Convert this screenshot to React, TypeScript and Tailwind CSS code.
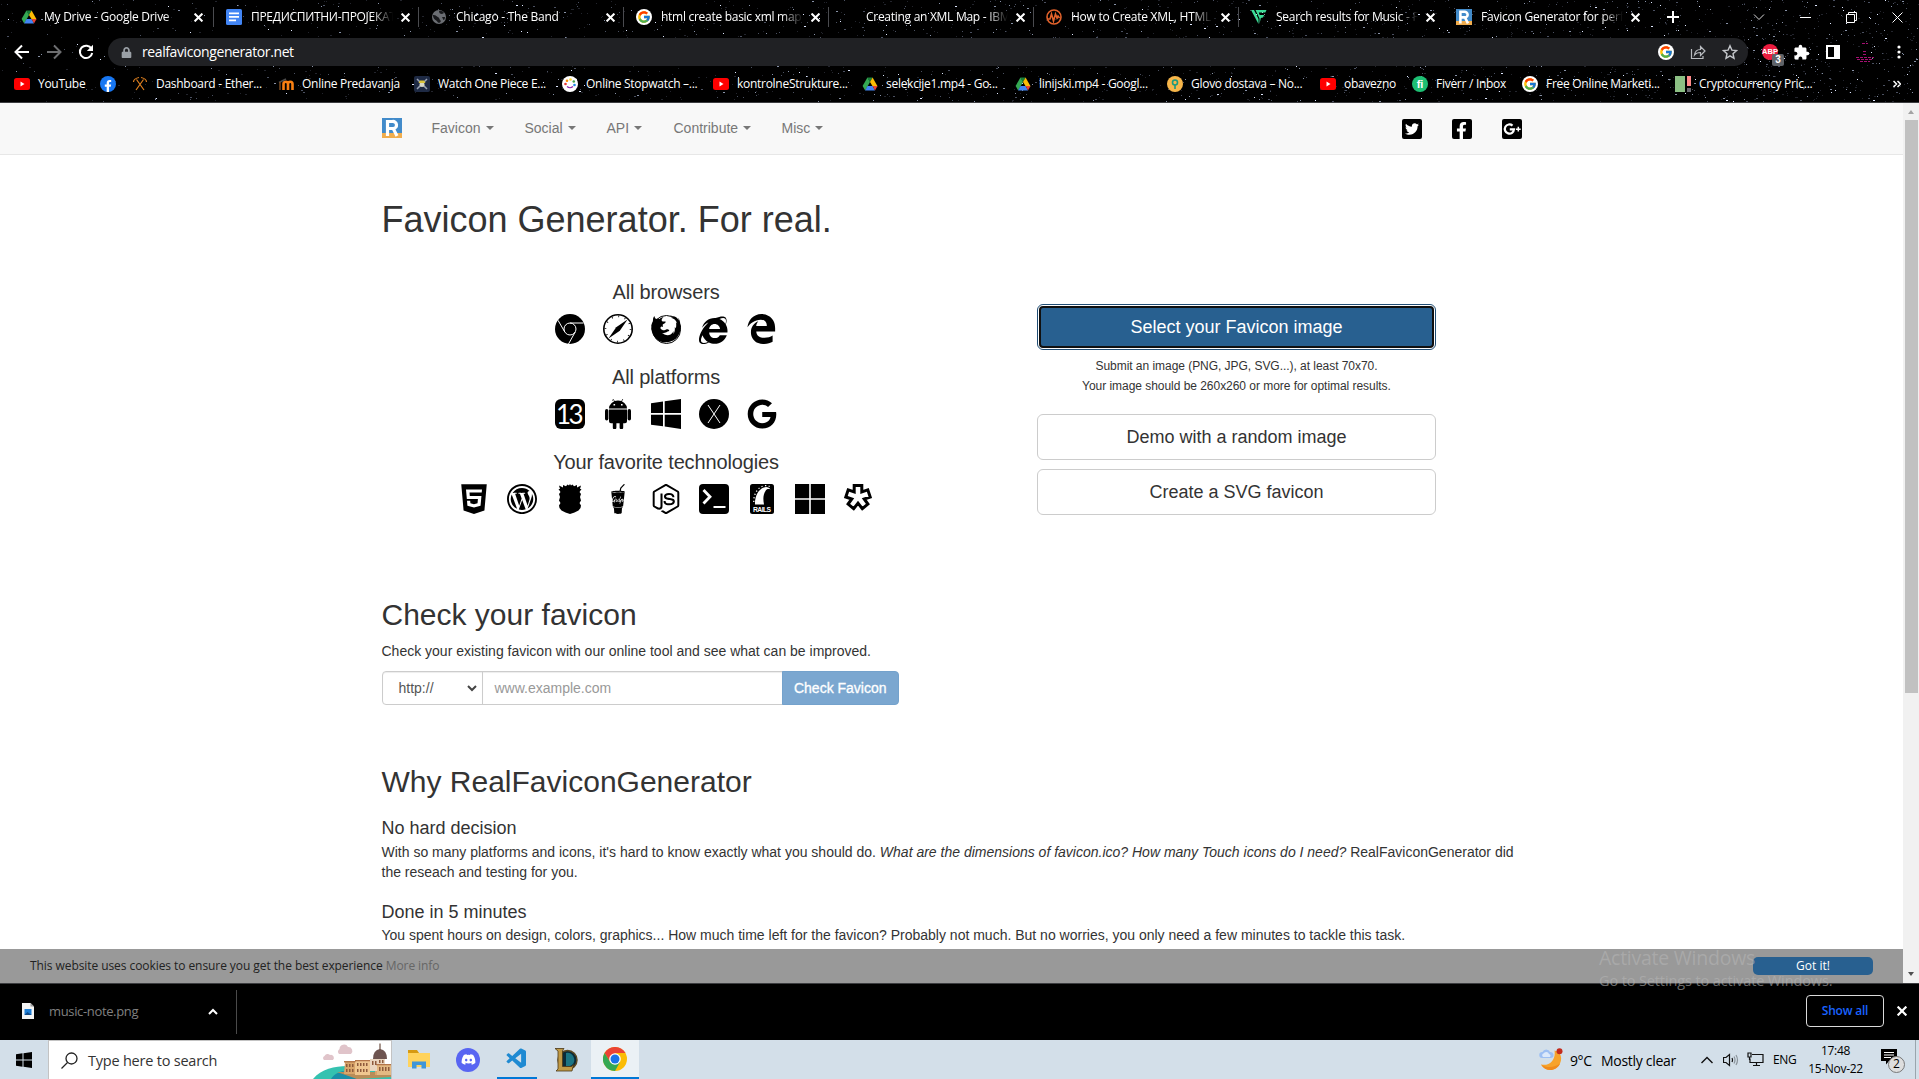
import React from "react";
import { ImEdge, ImFirefox, ImIe, ImWordpress } from "react-icons/im";
import { FaDiscord, FaGoogle, FaGulp, FaHtml5, FaLock, FaTwitter, FaFacebookF } from "react-icons/fa";
import { FcGoogle } from "react-icons/fc";
import { MdExtension } from "react-icons/md";
import { SiNodedotjs } from "react-icons/si";
import { VscVscode } from "react-icons/vsc";

const UI = "font-['Open_Sans','Noto_Sans',sans-serif]";
const ARIAL = "font-['Liberation_Sans',Arial,sans-serif]";

/* ---------- star field behind the browser frame ---------- */

function makeStars() {
  let seed = 90210;
  const rnd = () => {
    seed = (seed * 1664525 + 1013904223) % 4294967296;
    return seed / 4294967296;
  };
  const paths = ["", "", "", ""];
  for (let i = 0; i < 4200; i++) {
    const x = Math.floor(rnd() * 1919);
    const y = Math.floor(rnd() * 102);
    const level = Math.floor(rnd() * rnd() * 4.6);
    const keep = rnd() < 0.25 + (x / 1919) * 0.75;
    const wide = rnd() > 0.8 ? 2 : 1;
    if (keep) paths[Math.min(level, 3)] += `M${x} ${y}h${wide}v1h-${wide}z`;
  }
  return paths;
}
const STARS = makeStars();
const STAR_COLORS = ["#22242c", "#4a5060", "#8791a6", "#dfe8ff"];

function Stars() {
  return (
    <svg className="absolute inset-0" width="1919" height="102" aria-hidden="true">
      {STARS.map((d, i) => (
        <path key={i} d={d} fill={STAR_COLORS[i]} />
      ))}
    </svg>
  );
}

/* ---------- small brand icons ---------- */

const Drive = () => (
  <svg width="16" height="16" viewBox="0 0 16 16">
    <path d="M5.4 1.5h5.2L8 6z" fill="#188038" />
    <path d="M5.4 1.5 8 6 3.2 14.4.6 10z" fill="#34a853" />
    <path d="M10.600 1.500 8 6l2.600 4.200h4.900z" fill="#fbbc04" />
    <path d="M5.500 10h5.100L13 14.400H3.100z" fill="#4285f4" />
    <path d="M10.600 10h4.900L13 14.400z" fill="#ea4335" />
  </svg>
);
const Docs = () => (
  <svg width="16" height="16" viewBox="0 0 16 16">
    <rect width="16" height="16" rx="1.500" fill="#4285f4" />
    <path d="M3 3.500h10v1.800H3zM3 7h10v1.800H3zM3 10.500h7v1.800H3z" fill="#fff" />
  </svg>
);
const Globe = () => (
  <svg width="16" height="16" viewBox="0 0 16 16">
    <circle cx="8" cy="8" r="7" fill="#6b6e73" />
    <path d="M2 6c3 0 3 1 5 2s1 3 3 4c-1 2-2 2-3 1.500C6 11 2 11 2 6zM8 2c0 2 1 3 3 3l2-1c-1-2-3-2.500-5-2zM11 8l3 0c0 1-.5 3-1.500 3z" fill="#17181b" />
  </svg>
);
const GoogleRound = () => (
  <span className="flex size-4 items-center justify-center rounded-full bg-white">
    <FcGoogle size={14} />
  </span>
);
const Pulse = () => (
  <svg width="16" height="16" viewBox="0 0 16 16" fill="none" stroke="#e2622b" strokeWidth="1.600">
    <circle cx="8" cy="8" r="7" />
    <path d="M1.500 10H4l1.500-5 2 7 2-7 1.500 4 1-2 1.500 2" />
  </svg>
);
const Flutter = () => (
  <svg width="16" height="16" viewBox="0 0 16 16" fill="#3ddc97">
    <path d="M0 1h3l4.500 9v5z" />
    <path d="M4.500 1H15.500l-1.200 2.600H7.800L8.600 6h4.600l-1.200 2.500-2.200.5L8.500 15V9.500z" />
  </svg>
);
const RLogo = ({ size = 16 }: { size?: number }) => (
  <svg width={size} height={size} viewBox="0 0 20 20">
    <path d="M0 0h20v15H0z" fill="#428bca" />
    <path d="M0 15h20v5H0z" fill="#f0ad4e" />
    <path d="M5.500 18V3.500h5a3.600 3.600 0 0 1 .8 7.200L15 18M5.500 10.500h5.500" fill="none" stroke="#fff" strokeWidth="3.200" />
  </svg>
);
const YouTube = () => (
  <svg width="16" height="16" viewBox="0 0 16 16">
    <rect y="2" width="16" height="12" rx="2.500" fill="#f00" />
    <path d="M6.500 5.500v5L10.500 8z" fill="#fff" />
  </svg>
);
const Facebook = () => (
  <span className="flex size-4 items-end justify-center rounded-full bg-[#1877f2] text-white">
    <FaFacebookF size={12} />
  </span>
);
const Pickaxes = () => (
  <svg width="16" height="16" viewBox="0 0 16 16" fill="none" stroke="#e0801f" strokeWidth="1.200">
    <path d="M4 14 11.500 3.500M12 14 4.500 3.500M1.500 6c0-2 2.500-4 5.500-4.500M14.500 6c0-2-2.500-4-5.500-4.500" />
  </svg>
);
const Moodle = () => (
  <svg width="16" height="16" viewBox="0 0 16 16" fill="none" strokeWidth="2.600">
    <path d="M5.500 14V8a2 2 0 0 1 4.500 0v6M10 8a2 2 0 0 1 4.500 0v6" stroke="#f98012" />
    <path d="M1 6.500 8 3" stroke="#4a4a4a" strokeWidth="1.600" />
    <path d="M2 6v8" stroke="#7a4a20" strokeWidth="1.500" />
  </svg>
);
const OnePiece = () => (
  <svg width="16" height="16" viewBox="0 0 16 16">
    <rect width="16" height="16" rx="2" fill="#1e2a44" />
    <path d="m3 3 10 10M13 3 3 13" stroke="#9aa3b5" strokeWidth="1.500" />
    <circle cx="8" cy="8.500" r="2.500" fill="#d8d8c8" />
    <path d="M4.500 7h7L10 4.500H6z" fill="#d9c43a" />
  </svg>
);
const Stopwatch = () => (
  <svg width="16" height="16" viewBox="0 0 16 16">
    <circle cx="8" cy="8" r="8" fill="#fff" />
    <circle cx="3.500" cy="8" r="1.300" fill="#e53935" />
    <circle cx="5" cy="4.800" r="1.300" fill="#fb8c00" />
    <circle cx="8.500" cy="3.500" r="1.300" fill="#fdd835" />
    <circle cx="11.800" cy="5.500" r="1.300" fill="#43a047" />
    <circle cx="12.500" cy="9" r="1.300" fill="#1e88e5" />
    <path d="M5 10.500q3 2.500 6 0" fill="none" stroke="#8e24aa" strokeWidth="1.200" />
  </svg>
);
const Glovo = () => (
  <svg width="16" height="16" viewBox="0 0 16 16">
    <circle cx="8" cy="8" r="8" fill="#f7b64a" />
    <circle cx="8" cy="6.500" r="2.500" fill="none" stroke="#1a9a80" strokeWidth="1.600" />
    <path d="M8 9v4" stroke="#1a9a80" strokeWidth="1.600" />
  </svg>
);
const Fiverr = () => (
  <span className={`flex size-4 items-center justify-center rounded-full bg-[#1dbf73] text-[11px] leading-none font-bold text-white ${ARIAL}`}>
    fi
  </span>
);
const CoinBars = () => (
  <svg width="16" height="16" viewBox="0 0 16 16">
    <path d="M0 0h10v16H0z" fill="#8cc084" />
    <path d="M12 0h4v10h-4z" fill="#ff8a8a" />
    <path d="M12 12h4v4h-4z" fill="#6b6b72" />
  </svg>
);
const Cross = ({ size = 8, width = 1.8 }: { size?: number; width?: number }) => (
  <svg width={size} height={size} viewBox="0 0 8 8" stroke="#fff" strokeWidth={width}>
    <path d="m.5.5 7 7m0-7-7 7" />
  </svg>
);

/* ---------- browser frame ---------- */

const TABS = [
  { icon: <Drive />, title: "My Drive - Google Drive", sep: true, track: "tracking-[-0.26px]" },
  { icon: <Docs />, title: "ПРЕДИСПИТНИ-ПРОЈЕКАТ", sep: true, track: "tracking-[-0.3px]" },
  { icon: <Globe />, title: "Chicago - The Band", sep: true, track: "tracking-[-0.25px]" },
  { icon: <GoogleRound />, title: "html create basic xml map - G", sep: true, track: "tracking-[-0.28px]" },
  { icon: null, title: "Creating an XML Map - IBM D", sep: true, track: "tracking-[-0.28px]" },
  { icon: <Pulse />, title: "How to Create XML, HTML M", sep: true, track: "tracking-[-0.25px]" },
  { icon: <Flutter />, title: "Search results for Music - Fr", sep: false, track: "tracking-[-0.28px]" },
  { icon: <RLogo />, title: "Favicon Generator for perfec", sep: false, track: "tracking-[-0.22px]" },
];

function TabStrip() {
  return (
    <div className="relative flex h-[34px] items-center pl-[9px] text-white">
      {TABS.map((t, i) => (
        <div key={t.title} className="relative flex h-[34px] w-[205px] shrink-0 items-center pl-3">
          <span className="flex size-4 shrink-0">{t.icon}</span>
          <span
            className={`w-[142px] overflow-hidden mask-r-from-85% text-[12px] leading-4 whitespace-nowrap ${t.track} ${i === 0 ? "ml-[7px]" : "ml-[9px]"}`}
          >
            {t.title}
          </span>
          <span className="ml-2">
            <Cross size={9} />
          </span>
          {t.sep && <span className="absolute top-[7px] right-0 h-5 w-px bg-[#4a4b4f]" />}
        </div>
      ))}
      <svg className="ml-[18px]" width="12" height="12" viewBox="0 0 12 12" stroke="#fff" strokeWidth="2">
        <path d="M6 0v12M0 6h12" />
      </svg>
      <div className="ml-auto flex h-7 items-center gap-[35px] pr-4">
        <svg width="12" height="12" viewBox="0 0 12 12" fill="none" stroke="#ddd">
          <path d="m1 3.500 5 5 5-5" />
        </svg>
        <svg width="11" height="11" viewBox="0 0 11 11" stroke="#fff">
          <path d="M0 5.500h11" />
        </svg>
        <svg width="11" height="11" viewBox="0 0 11 11" fill="none" stroke="#fff">
          <path d="M.5 2.500h8v8h-8zM2.500 2.500v-2h8v8h-2" />
        </svg>
        <svg width="11" height="11" viewBox="0 0 11 11" stroke="#fff">
          <path d="m.5.500 10 10m0-10-10 10" />
        </svg>
      </div>
    </div>
  );
}

function Toolbar() {
  return (
    <div className="relative flex h-[36px] items-center pl-[14px] text-white">
      <svg width="16" height="16" viewBox="0 0 16 16" fill="none" stroke="#fff" strokeWidth="2">
        <path d="M15 8H2M8 1.500 1.500 8 8 14.500" />
      </svg>
      <svg className="ml-4" width="16" height="16" viewBox="0 0 16 16" fill="none" stroke="#6d6e70" strokeWidth="2">
        <path d="M1 8h13M8 1.500 14.500 8 8 14.500" />
      </svg>
      <svg className="ml-4" width="16" height="16" viewBox="0 0 16 16" fill="none" stroke="#fff" strokeWidth="2">
        <path d="M13.500 4.800A6.200 6.200 0 1 0 14.200 9" />
        <path d="M15 .8V7H8.800z" fill="#fff" stroke="none" />
      </svg>
      <div className="ml-[14px] flex h-7 w-[1640px] items-center rounded-full bg-[#202124] pr-[10px] pl-[13px]">
        <FaLock size={11} color="#9aa0a6" />
        <span className="ml-[10px] text-[14px] leading-5 tracking-[-0.4px]">realfavicongenerator.net</span>
        <div className="ml-auto flex items-center gap-4">
          <GoogleRound />
          <svg width="16" height="16" viewBox="0 0 16 16" fill="none" stroke="#b9bcc0" strokeWidth="1.200">
            <path d="M1.500 5v9.500H13V12M4.500 11c.5-4 3-5.500 6-5.500V2.500L15 7l-4.500 4.500v-3c-3 0-4.500.5-6 2.500z" />
          </svg>
          <svg width="16" height="16" viewBox="0 0 16 16" fill="none" stroke="#c4c7cb" strokeWidth="1.400">
            <path d="m8 1.800 1.900 4.300 4.600.5-3.500 3.100 1 4.600L8 11.900l-4 2.400 1-4.600L1.500 6.600l4.600-.5z" />
          </svg>
        </div>
      </div>
      <div className="ml-[14px] flex items-center">
        <div className={`relative flex size-4 items-center justify-center rounded-full bg-[#ec1c3f] text-[7.5px] leading-none font-bold ${ARIAL}`}>
          ABP
          <span className="absolute top-[10px] left-[10px] flex h-3 w-3 items-center justify-center rounded-[2px] bg-[#5f6368] text-[10px]">
            3
          </span>
        </div>
        <MdExtension className="ml-[15px]" size={17} />
        <svg className="ml-[16px]" width="14" height="14" viewBox="0 0 14 14">
          <path d="M0 0h14v14H0zM2 2v10h6V2z" fill="#fff" fillRule="evenodd" />
        </svg>
        <svg className="ml-[15px]" width="20" height="20" viewBox="0 0 20 20" stroke="#a50f72">
          <path d="M7 1.500h6M8 9.500h4M8 12.500h4M1 15.500h18M2 17.500h16M5 19.500h10" strokeWidth="1.200" strokeDasharray="3 1" />
        </svg>
        <svg className="ml-[22px]" width="4" height="14" viewBox="0 0 4 14" fill="#fff">
          <circle cx="2" cy="2" r="1.600" />
          <circle cx="2" cy="7" r="1.600" />
          <circle cx="2" cy="12" r="1.600" />
        </svg>
      </div>
    </div>
  );
}

const BOOKMARKS = [
  { icon: <YouTube />, label: "YouTube", w: "w-[86px]" },
  { icon: <Facebook />, label: "", w: "w-[32px]" },
  { icon: <Pickaxes />, label: "Dashboard - Ether...", w: "w-[146px]" },
  { icon: <Moodle />, label: "Online Predavanja", w: "w-[136px]" },
  { icon: <OnePiece />, label: "Watch One Piece E...", w: "w-[148px]" },
  { icon: <Stopwatch />, label: "Online Stopwatch –...", w: "w-[151px]" },
  { icon: <YouTube />, label: "kontrolneStrukture...", w: "w-[149px]" },
  { icon: <Drive />, label: "selekcije1.mp4 - Go...", w: "w-[153px]" },
  { icon: <Drive />, label: "linijski.mp4 - Googl...", w: "w-[152px]" },
  { icon: <Glovo />, label: "Glovo dostava – No...", w: "w-[153px]" },
  { icon: <YouTube />, label: "obavezno", w: "w-[92px]" },
  { icon: <Fiverr />, label: "Fiverr / Inbox", w: "w-[110px]" },
  { icon: <GoogleRound />, label: "Free Online Marketi...", w: "w-[153px]" },
  { icon: <CoinBars />, label: "Cryptocurrency Pric...", w: "w-[200px]" },
];

function BookmarkBar() {
  return (
    <div className="relative flex h-[28px] items-center pl-[14px] text-white">
      {BOOKMARKS.map((b, i) => (
        <div key={i} className={`flex shrink-0 items-center ${b.w}`}>
          <span className="flex size-4 shrink-0">{b.icon}</span>
          <span className="ml-2 text-[12px] leading-4 tracking-[-0.28px] whitespace-nowrap">{b.label}</span>
        </div>
      ))}
      <svg className="ml-[18px]" width="8" height="8" viewBox="0 0 8 8" fill="none" stroke="#fff" strokeWidth="1.500">
        <path d="m.5 1 3 3-3 3M4.500 1l3 3-3 3" />
      </svg>
    </div>
  );
}

/* ---------- web page ---------- */

const NAV = [
  { label: "Favicon", w: "w-[93px]" },
  { label: "Social", w: "w-[82px]" },
  { label: "API", w: "w-[67px]" },
  { label: "Contribute", w: "w-[108px]" },
  { label: "Misc", w: "w-[80px]" },
];

function SiteNav() {
  return (
    <nav className="flex h-[52px] border-b border-[#e7e7e7] bg-[#f8f8f8] pl-[382px]">
      <span className="mt-[15px]">
        <RLogo size={20} />
      </span>
      <div className="ml-[29.5px] flex items-center text-[14px] text-[#777]">
        {NAV.map((n) => (
          <span key={n.label} className={`flex items-center pb-0.5 ${n.w}`}>
            {n.label}
            <span className="mt-px ml-[5px] border-x-4 border-t-4 border-x-transparent border-t-[#777]" />
          </span>
        ))}
      </div>
      <div className="mt-4 ml-[540.5px] flex gap-[30px]">
        <span className="flex size-5 items-center justify-center rounded-[2px] bg-black text-white">
          <FaTwitter size={14} />
        </span>
        <span className="flex size-5 items-end justify-end rounded-[2px] bg-black pr-0.5 text-white">
          <FaFacebookF size={17} />
        </span>
        <svg width="20" height="20" viewBox="0 0 20 20">
          <rect width="20" height="20" rx="2" fill="#000" />
          <path d="M10.500 6.600A4.600 4.600 0 1 0 12 10.300H7.800" fill="none" stroke="#fff" strokeWidth="2.200" />
          <path d="M16.300 7.800v4.800M13.900 10.200h4.800" stroke="#fff" strokeWidth="1.500" />
        </svg>
      </div>
    </nav>
  );
}

const ChromeMark = () => (
  <svg width="30" height="30" viewBox="0 0 30 30">
    <circle cx="15" cy="15" r="15" />
    <circle cx="15" cy="15" r="6" fill="none" stroke="#fff" strokeWidth="1" />
    <path d="M15 9h13.500M9.800 18 3 6.300M20.200 18 13.500 30" stroke="#fff" strokeWidth="1" />
  </svg>
);
const SafariMark = () => (
  <svg width="30" height="30" viewBox="0 0 30 30" fill="none" stroke="#000">
    <circle cx="15" cy="15" r="14.200" strokeWidth="1.600" />
    <circle cx="15" cy="15" r="12.600" strokeWidth="1.800" strokeDasharray=".8 5.798" />
    <path d="M24.500 5.500 16.800 16.800 5.500 24.500 13.200 13.200z" fill="#000" stroke="none" />
  </svg>
);
const FirefoxMark = () => (
  <span className="relative flex">
    <ImFirefox size={30} />
    <span className="absolute inset-[0.5px] rounded-full border-[1.5px] border-black" />
  </span>
);
const AndroidMark = () => (
  <svg width="30" height="30" viewBox="0 0 30 30">
    <path d="M6 9.600a9 8 0 0 1 18 0zM6 10.500h18v11.700a2 2 0 0 1-2 2H8a2 2 0 0 1-2-2z" />
    <path d="M9 1.500 10.500.5 12 3.500M19.800 0 18 3.500" fill="none" stroke="#000" strokeWidth=".7" />
    <rect x="2" y="10" width="3.400" height="11.500" rx="1.700" />
    <rect x="24.600" y="10" width="3.400" height="11.500" rx="1.700" />
    <path d="M9.800 23h3.600v5.500a1.700 1.700 0 0 1-3.600 0zM16.600 23h3.600v5.500a1.700 1.700 0 0 1-3.600 0z" />
    <path d="M10.500 5h1.600v1.500h-1.600zM18 5h1.600v1.500H18z" fill="#fff" />
  </svg>
);
const Ios13 = () => (
  <svg width="30" height="30" viewBox="0 0 30 30">
    <rect width="30" height="30" rx="6" fill="#000" />
    <text x="13.500" y="24.500" fill="#fff" fontSize="26" textAnchor="middle" fontFamily="Lato, sans-serif" fontWeight="400" letterSpacing="-2.500">
      13
    </text>
  </svg>
);
const Windows8 = () => (
  <svg width="30" height="30" viewBox="0 0 30 30">
    <path d="M0 4.200 12 2.500V14H0zM13.700 2.300 30 0v14H13.700zM0 15.800h12v11.500L0 25.700zM13.700 15.800H30V30l-16.300-2.400z" />
  </svg>
);
const OsX = () => (
  <svg width="30" height="30" viewBox="0 0 30 30">
    <circle cx="15" cy="15" r="15" />
    <path d="m9 6 12 18M21 6 9 24" stroke="#fff" strokeWidth="1" />
  </svg>
);
const Pineapple = () => (
  <svg width="30" height="30" viewBox="0 0 30 30">
    <path d="M15 0l1 1.500L17.500.5 19 2.300 22 1v2.500l4-2-1 3.500h1.500L24.500 8l1.500 2-1 3 1 3.500L24.500 19l1.500 2.500-.5 2.500-2 2.500-4 2L15 30l-4.500-1.500-4-2-2-2.500-.5-2.500L5.500 19 4 16.500 5 13 4 10l1.500-2L3.500 5H5L4 1.500l4 2V1l3 1.300L12.500.5 14 1.500z" />
  </svg>
);
const PowerShell = () => (
  <svg width="30" height="30" viewBox="0 0 30 30">
    <rect width="30" height="30" rx="4" />
    <path d="m4.500 6 6.500 6.800-6.500 6.700" fill="none" stroke="#fff" strokeWidth="2.800" />
    <path d="M14.500 23h12" stroke="#fff" strokeWidth="2" />
  </svg>
);
const Rails = () => (
  <svg width="24" height="30" viewBox="0 0 24 30">
    <rect width="24" height="30" rx="2.500" />
    <path d="M5 20.500C4.500 12 9 3.500 16 3c2 0 4 1 4.500 2.500-2-.8-4-.5-5 1.500-2.500 4-2.500 8-1.500 13.500z" fill="#fff" />
    <path d="M3.800 18C3.500 11 7 3 15 1.600c3-.2 5 .7 6.500 2.400" fill="none" stroke="#fff" strokeWidth="1.300" strokeDasharray="1.200 2.400" />
    <text x="3" y="27.800" fill="#fff" fontSize="6.800" fontWeight="700" textLength="18" fontFamily="Liberation Sans, sans-serif">
      RAILS
    </text>
  </svg>
);
const FourSquares = () => (
  <svg width="30" height="30" viewBox="0 0 30 30">
    <path d="M0 0h14.200v14.200H0zM15.800 0H30v14.200H15.800zM0 15.800h14.200V30H0zM15.800 15.800H30V30H15.800z" />
  </svg>
);
const Asterisk = () => (
  <svg width="30" height="30" viewBox="0 0 30 30" fill="none" stroke="#000" strokeWidth="3">
    <path d="M11.200 1.500h7.600v6.300l6-2 2.400 7.200-6 2 3.700 5.100-5.600 4.600-4.300-5.500-4.300 5.500-5.600-4.600 3.700-5.100-6-2 2.400-7.200 6 2z" />
  </svg>
);

const GROUPS = [
  {
    title: "All browsers",
    icons: [<ChromeMark />, <SafariMark />, <FirefoxMark />, <ImIe size={30} />, <ImEdge size={30} />],
  },
  {
    title: "All platforms",
    icons: [<Ios13 />, <AndroidMark />, <Windows8 />, <OsX />, <FaGoogle size={30} />],
  },
  {
    title: "Your favorite technologies",
    icons: [
      <FaHtml5 className="h-[34px] w-[30px]" />,
      <ImWordpress size={30} />,
      <Pineapple />,
      <FaGulp size={30} />,
      <SiNodedotjs size={30} />,
      <PowerShell />,
      <Rails />,
      <FourSquares />,
      <Asterisk />,
    ],
  },
];

function Hero() {
  return (
    <section className="mt-[41px] flex">
      <div className="flex w-[569px] flex-col gap-[21px]">
        {GROUPS.map((g) => (
          <div key={g.title} className="flex flex-col items-center">
            <h4 className="text-[20px] leading-[22px] tracking-[-0.15px]">{g.title}</h4>
            <div className="mt-[10px] flex h-8 text-black">
              {g.icons.map((icon, i) => (
                <span key={i} className="flex w-12 items-center justify-center">
                  {icon}
                </span>
              ))}
            </div>
          </div>
        ))}
      </div>
      <div className="mt-[23px] ml-[86.5px] w-[399px] text-center text-[18px]">
        <button className="block h-[46px] w-full rounded-md border border-[#204d74] bg-white p-px text-white">
          <span className="flex size-full items-center justify-center rounded-[4px] border-2 border-[#101010] bg-[#286090]">
            Select your Favicon image
          </span>
        </button>
        <p className="mt-[6px] text-[12px] leading-5 tracking-[-0.04px]">
          Submit an image (PNG, JPG, SVG...), at least 70x70.
          <br />
          Your image should be 260x260 or more for optimal results.
        </p>
        <button className="mt-[18px] block h-[46px] w-full rounded-md border border-[#ccc]">Demo with a random image</button>
        <button className="mt-[9px] block h-[46px] w-full rounded-md border border-[#ccc]">Create a SVG favicon</button>
      </div>
    </section>
  );
}

function CheckFavicon() {
  return (
    <section className="mt-[83px]">
      <h2 className="text-[30px] leading-[33px]">Check your favicon</h2>
      <p className="mt-[10px]">Check your existing favicon with our online tool and see what can be improved.</p>
      <div className="mt-[10px] flex h-[34px] w-[517.5px]">
        <div className="flex w-[101px] items-center justify-between rounded-l-[4px] border border-[#ccc] pr-[5px] pl-4 text-[#555] shadow-[inset_0_1px_1px_rgba(0,0,0,.075)]">
          http://
          <svg width="10" height="7" viewBox="0 0 10 7" fill="none" stroke="#444" strokeWidth="2">
            <path d="m1 1 4 4 4-4" />
          </svg>
        </div>
        <div className="-ml-px flex w-[301px] items-center border border-[#ccc] pl-3 text-[#999] shadow-[inset_0_1px_1px_rgba(0,0,0,.075)]">
          www.example.com
        </div>
        <button className="-ml-px flex flex-1 items-center justify-center rounded-r-[4px] border border-[#74a2cc] bg-[#7ba7d0] text-white [-webkit-text-stroke:0.3px_white]">
          Check Favicon
        </button>
      </div>
    </section>
  );
}

function Why() {
  return (
    <section className="mt-[60px]">
      <h2 className="text-[30px] leading-[33px]">Why RealFaviconGenerator</h2>
      <h4 className="mt-5 text-[18px] leading-5">No hard decision</h4>
      <p className="mt-1">
        With so many platforms and icons, it's hard to know exactly what you should do.{" "}
        <em>What are the dimensions of favicon.ico? How many Touch icons do I need?</em> RealFaviconGenerator did the
        reseach and testing for you.
      </p>
      <h4 className="mt-5 text-[18px] leading-5">Done in 5 minutes</h4>
      <p className="mt-[3px]">
        You spent hours on design, colors, graphics... How much time left for the favicon? Probably not much. But no
        worries, you only need a few minutes to tackle this task.
      </p>
    </section>
  );
}

function Viewport() {
  return (
    <div className={`flex h-[880px] shrink-0 bg-white text-[14px] leading-5 text-[#333] ${ARIAL}`}>
      <div className="relative w-[1903px] overflow-hidden">
        <SiteNav />
        <main className="mt-[45px] ml-[381.5px] w-[1140px]">
          <h1 className="text-[36px] leading-10">Favicon Generator. For real.</h1>
          <Hero />
          <CheckFavicon />
          <Why />
        </main>
        <div className={`absolute inset-x-0 bottom-0 flex h-[34px] items-center bg-[#999] pr-[30px] pl-[30px] text-[12px] text-[#222] ${UI}`}>
          <span className="tracking-[-0.07px]">
            This website uses cookies to ensure you get the best experience <span className="text-[#666]">More info</span>
          </span>
          <button className="ml-auto h-[18px] w-[120px] rounded-[5px] bg-[#286090] text-[12px] leading-4 text-white">
            Got it!
          </button>
        </div>
      </div>
      <div className="flex w-4 flex-col items-center justify-between bg-[#f1f1f1] pt-[7px] pb-[7px]">
        <span className="border-x-[3px] border-b-4 border-x-transparent border-b-[#a3a3a3]" />
        <span className="mt-[6px] h-[573px] w-[13px] bg-[#c1c1c1]" />
        <span className="mt-auto border-x-[3px] border-t-4 border-x-transparent border-t-[#505050]" />
      </div>
    </div>
  );
}

/* ---------- download shelf and taskbar ---------- */

function Downloads() {
  return (
    <div className="flex h-[56px] shrink-0 items-center bg-black pb-0.5">
      <svg className="ml-[22px]" width="12" height="16" viewBox="0 0 12 16">
        <path d="M0 0h8.500L12 3.500V16H0z" fill="#f4f4f4" />
        <path d="M8.500 0v3.500H12z" fill="#999" />
        <path d="M2.500 6h7v6h-7z" fill="#1f7fd6" />
        <path d="m2.500 12 3-3 4 3z" fill="#124a86" />
      </svg>
      <span className="mt-0.5 ml-[15px] w-[159px] text-[13px] tracking-[-0.35px] text-[#808080]">music-note.png</span>
      <svg width="10" height="7" viewBox="0 0 10 7" fill="none" stroke="#fff" strokeWidth="2">
        <path d="m1 6 4-4 4 4" />
      </svg>
      <span className="mt-0.5 ml-[18px] h-11 w-px bg-[#4a4a4a]" />
      <button className="ml-auto h-8 w-[78px] rounded-[4px] border border-[#dadada] text-[12px] font-semibold tracking-[-0.2px] text-[#1a63ff]">
        Show all
      </button>
      <span className="mr-[12px] ml-[13px]">
        <Cross size={10} />
      </span>
    </div>
  );
}

const SearchArt = () => (
  <svg width="78" height="38" viewBox="0 0 78 38">
    <path d="M0 38C8 28 22 25 34 25l44 5v8z" fill="#35c2b0" />
    <path d="M18 38c3-5 8-7 12-8l14 8z" fill="#1a8fa8" />
    <path d="M24 31h54v5l-34 2z" fill="#b98d58" />
    <path d="M32 21h12v12H31zM62 14h10v20H62z" fill="#d9a66b" />
    <path d="M42 20h15v14H42z" fill="#efc68f" />
    <path d="M57 18h15v12H57z" fill="#ead6c0" />
    <path d="M64 24h14v10H64z" fill="#e3b983" />
    <path d="M60 18q0-9 7-10 7 1 7 10z" fill="#6e5450" />
    <path d="M66.400 2.500h1.200V9h-1.200z" fill="#6b4d40" />
    <path d="M31 20h12l-1 1.500H31zM42 19h15v1.200H42zM63 23h15v1.200H63z" fill="#b3764a" />
    <path d="M33 23h1.500v3H33zm3 0h1.500v3H36zm3 0h1.500v3H39zm-6 5h1.500v3H33zm3 0h1.500v3H36zm3 0h1.500v3H39zm5-6h1.500v3H44zm3 0h1.500v3H47zm3 0h1.500v3H50zm3 0h1.500v3H53zm-9 6h1.500v3H44zm3 0h1.500v3H47zm3 0h1.500v3H50zm3 0h1.500v3H53zm6-8h1.500v4H59zm3 0h1.500v4H62zm4-1h1.500v3H66zm3 0h1.500v3H69zm-3 7h1.500v4H66zm3 0h1.500v4H69zm3 0h1.500v4H72zm3 0h1.500v4H75z" fill="#8e5a3c" />
    <path d="M26 13a3.500 3.500 0 0 1 .5-5 4.500 4.500 0 0 1 8.500-2 4 4 0 0 1 3 7zM11 19a2.300 2.300 0 0 1 .5-4 3.300 3.300 0 0 1 5.500-1 3 3 0 0 1 3 5z" fill="#e0c4ca" />
  </svg>
);

const Chrome = () => (
  <svg width="24" height="24" viewBox="0 0 24 24">
    <circle cx="12" cy="12" r="12" fill="#fbbc05" />
    <path d="M1.600 6A12 12 0 0 1 22.400 6H12L7 14.800z" fill="#ea4335" />
    <path d="M1.600 6A12 12 0 0 0 12 24l5-9-9.500.5z" fill="#34a853" />
    <circle cx="12" cy="12" r="5.800" fill="#fff" />
    <circle cx="12" cy="12" r="4.500" fill="#1a73e8" />
  </svg>
);

function Taskbar() {
  return (
    <div className="flex h-[39px] shrink-0 bg-[#d3dfe9] text-black">
      <div className="flex w-12 items-center pl-4">
        <svg width="16" height="16" viewBox="0 0 16 16">
          <path d="M0 2.200 6.500 1.300v6.200H0zM7.500 1.200 16 0v7.500H7.500zM0 8.500h6.500v6.200L0 13.800zM7.500 8.500H16V16l-8.500-1.200z" />
        </svg>
      </div>
      <div className="flex w-[344px] items-center border border-b-0 border-[#c3c3c3] bg-white pl-3 text-[#333]">
        <svg width="17" height="17" viewBox="0 0 17 17" fill="none" stroke="#222" strokeWidth="1.300">
          <circle cx="10.500" cy="6.500" r="5.500" />
          <path d="M6.500 10.500.5 16.500" />
        </svg>
        <span className="mt-px ml-[10px] flex-1 text-[14.500px] tracking-[-0.22px]">Type here to search</span>
        <SearchArt />
      </div>
      <div className="flex w-[53px] items-center justify-center">
        <svg width="22" height="19" viewBox="0 0 22 19">
          <path d="M0 1h9l2 2h11v14H0z" fill="#ffd35c" />
          <path d="M0 0h9l2 3H0z" fill="#d69a12" />
          <path d="M4 18.500V11.500h14v7h-4.500V15h-5v3.500z" fill="#3f96d8" />
        </svg>
      </div>
      <div className="flex w-[46px] items-center justify-center">
        <span className="flex size-6 items-center justify-center rounded-full bg-[#5865f2] text-white">
          <FaDiscord size={15} />
        </span>
      </div>
      <div className="ml-[6px] flex w-10 items-center justify-center border-b-2 border-[#0078d7] text-[#1f8ad2]">
        <VscVscode size={24} />
      </div>
      <div className="flex w-[54px] items-center justify-center pl-1">
        <svg width="24" height="24" viewBox="0 0 24 24">
          <circle cx="13.500" cy="12" r="9.500" fill="#0c2b38" stroke="#5f4a22" strokeWidth="1.500" />
          <path d="M12 5a7 7 0 0 1 6 12q-3 2-6 1z" fill="#1c7584" />
          <path d="M1 .5h9L8.500 2.500v16h9l2-2-1.500 6.500H2L4 21V3z" fill="#c19a45" stroke="#4a3716" strokeWidth=".8" />
        </svg>
      </div>
      <div className="flex w-12 items-center justify-center border-b-2 border-[#0078d7] bg-[#ebf1f5]">
        <Chrome />
      </div>
      <div className="ml-auto flex items-center text-[14px]">
        <svg width="24" height="24" viewBox="0 0 24 24">
          <path d="M15.500 2.500C22 4 23.500 10 21 15.500 18 23 7 25 2 16.500c9 2 15-5 13.500-14z" fill="#f7a32b" />
          <path d="M21 15.500C18 23 7 25 2 16.500c6 4 14 3 19-1z" fill="#f08a1c" />
          <path d="M3 10a3 3 0 0 1 .5-6 4 4 0 0 1 7.500 0 3 3 0 0 1 1 6z" fill="#9dbff3" />
          <path d="M4 9a2 2 0 0 1 .5-3.500 3 3 0 0 1 5.500.5A2 2 0 0 1 11 9z" fill="#dce9fb" />
          <circle cx="20.500" cy="3.200" r="3" fill="#c42b1c" />
        </svg>
        <span className="mt-px ml-[7px] w-[31px] tracking-[-0.4px]">9°C</span>
        <span className="mt-px w-[100px] tracking-[-0.3px]">Mostly clear</span>
        <svg width="12" height="8" viewBox="0 0 12 8" fill="none" stroke="#111" strokeWidth="1.400">
          <path d="m.5 7 5.500-5.500L11.500 7" />
        </svg>
        <svg className="ml-[10px]" width="16" height="14" viewBox="0 0 16 14" fill="none" stroke="#111" strokeWidth="1.200">
          <path d="M.5 4.500H3l3.500-3v11L3 9.500H.5zM9 5q1 2 0 4" />
          <path d="M11 3.500q2 3.500 0 7M13 2q3 5 0 10" stroke="#8b949b" />
        </svg>
        <svg className="ml-2" width="17" height="15" viewBox="0 0 17 15" fill="none" stroke="#111" strokeWidth="1.200">
          <path d="M5 2.500h11v8H3v-4M9.500 10.500v3M6 13.500h7M1 1h3v4H1zM2.500 5v3" />
        </svg>
        <span className="ml-[9px] w-[27px] text-[12px] tracking-[-0.4px]">ENG</span>
        <div className="ml-[4px] w-[63px] text-center text-[12px] leading-[18px] tracking-[-0.3px]">
          17:48
          <br />
          15-Nov-22
        </div>
        <div className="relative mt-0.5 ml-[14px] h-6 w-7">
          <svg width="16" height="16" viewBox="0 0 16 16">
            <path d="M0 0h16v12H8l-3 3.500V12H0z" />
            <path d="M3 3.500h10M3 6h10M3 8.500h7" stroke="#fff" />
          </svg>
          <span className="absolute top-[7px] left-[7px] flex size-[17px] items-center justify-center rounded-full border border-[#777] bg-[#dedede] text-[12px] leading-none">
            2
          </span>
        </div>
        <span className="mr-[3px] ml-[6px] h-[39px] w-px bg-[#9aa5ad]" />
      </div>
    </div>
  );
}

function Watermark() {
  return (
    <div className="absolute top-[946px] left-[1599px] whitespace-nowrap text-[#b4b4b4]/60">
      <div className="text-[19.5px] leading-6 tracking-[-0.25px]">Activate Windows</div>
      <div className="mt-px text-[14.5px] leading-[20px] tracking-[-0.12px]">Go to Settings to activate Windows.</div>
    </div>
  );
}

export default function App() {
  return (
    <div className={`relative flex h-[1079px] w-[1919px] flex-col overflow-hidden bg-black ${UI}`}>
      <header className="relative h-[102px] shrink-0 overflow-hidden bg-black">
        <Stars />
        <TabStrip />
        <Toolbar />
        <BookmarkBar />
      </header>
      <div className="h-px shrink-0 bg-[#3c3d40]" />
      <Viewport />
      <div className="h-px shrink-0 bg-[#3c3d40]" />
      <Downloads />
      <Taskbar />
      <Watermark />
    </div>
  );
}
